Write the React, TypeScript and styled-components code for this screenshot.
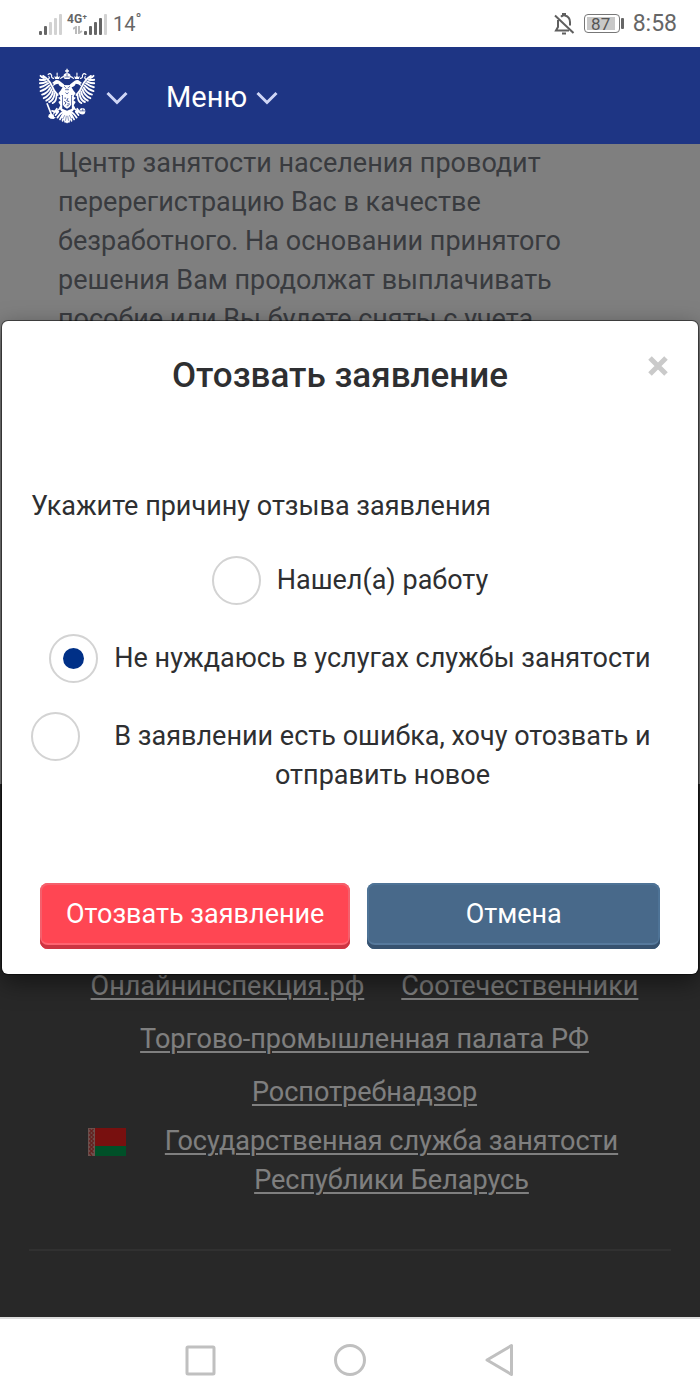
import React, { useState } from "react";
import styled, { createGlobalStyle } from "styled-components";

const GlobalStyle = createGlobalStyle`
  *, *::before, *::after { box-sizing: border-box; }
  body {
    margin: 0;
    background: #fff;
    font-family: Roboto, "Noto Sans", sans-serif;
    font-size: 27px;
    line-height: 39px;
    color: #2e2f31;
  }
  p, h2, ul, fieldset { margin: 0; padding: 0; border: 0; }
`;

const Screen = styled.div`
  min-height: 100vh;
  display: flex;
  flex-direction: column;
`;

const StatusBar = styled.div`
  height: 47px;
  flex: none;
  display: flex;
  align-items: center;
  justify-content: space-between;
  padding: 0 23px 0 38px;
  color: #666;
`;

const StatusGroup = styled.div<{ $gap: number }>`
  display: flex;
  align-items: center;
  gap: ${(p) => p.$gap}px;
`;

const Network = styled.div`
  display: flex;
  align-items: flex-end;
  gap: 5px;
`;

const NetworkLabel = styled.div`
  display: flex;
  flex-direction: column;
  align-items: flex-end;
  width: 20px;
  margin-right: -4px;
  font-size: 12px;
  font-weight: 700;
  line-height: 13px;
  svg { margin-right: 4px; }
`;

const Temperature = styled.span`
  display: flex;
  align-items: flex-start;
  font-size: 20px;
  line-height: 24px;
`;

const Degree = styled.span`
  font-size: 16px;
  line-height: 16px;
`;

const Battery = styled.span`
  display: flex;
  align-items: center;
  gap: 1px;
  &::after {
    content: "";
    width: 3px;
    height: 11px;
    border-radius: 1px;
    background: #666;
  }
`;

const BatteryBody = styled.span`
  width: 36px;
  height: 19px;
  border: 1px solid #777;
  border-radius: 4px;
  padding: 2px;
  display: flex;
`;

const BatteryLevel = styled.span`
  width: 28px;
  background: #c8c8c8;
  text-align: center;
  font-size: 17px;
  line-height: 14px;
  color: #555;
`;

const Clock = styled.span`
  font-size: 23px;
  line-height: 24px;
`;

const Header = styled.header`
  height: 97px;
  flex: none;
  display: flex;
  align-items: center;
  gap: 38px;
  padding: 0 35px;
  background: #1e3584;
`;

const HeaderButton = styled.button<{ $gap: number }>`
  display: flex;
  align-items: center;
  gap: ${(p) => p.$gap}px;
  padding: 2px 0 0;
  border: 0;
  background: none;
  color: #fff;
  font: inherit;
  font-size: 29px;
  line-height: 40px;
`;

const Stage = styled.div`
  position: relative;
  flex: 1;
  display: flex;
  flex-direction: column;
  overflow: hidden;
`;

const Article = styled.main`
  flex: 1;
  min-height: 640px;
  padding: 0 58px;
  background: #fff;
  color: #73777f;
`;

const Footer = styled.footer`
  background: #505050;
  padding: 183px 29px 66px;
`;

const LinkList = styled.ul`
  display: flex;
  flex-wrap: wrap;
  justify-content: center;
  gap: 14px 37px;
  padding: 0 30px 49px 59px;
  border-bottom: 2px solid #626262;
  list-style: none;
`;

const LinkItem = styled.li<{ $flag?: boolean }>`
  display: flex;
  align-items: flex-start;
  gap: 38px;
  text-align: center;
  margin-top: ${(p) => (p.$flag ? "-4px" : "0")};
  padding-right: ${(p) => (p.$flag ? "22px" : "0")};
  svg { flex: none; margin-top: 6px; }
`;

const FooterLink = styled.a`
  color: #fff;
  text-decoration: underline;
  text-decoration-thickness: 2px;
  text-underline-offset: 3px;
`;

const Overlay = styled.div`
  position: absolute;
  inset: 0;
  padding: 177px 2px 0;
  background: rgba(0, 0, 0, 0.5);
`;

const Dialog = styled.section`
  border-radius: 6px;
  background: #fff;
  box-shadow: 0 0 0 1px rgba(0, 0, 0, 0.45), 0 8px 24px rgba(0, 0, 0, 0.5);
`;

const DialogHead = styled.div`
  display: flex;
  align-items: flex-start;
  padding: 34px 30px 91px;
`;

const DialogTitle = styled.h2`
  flex: 1;
  text-align: center;
  font-size: 35px;
  font-weight: 500;
  line-height: 41px;
`;

const CloseButton = styled.button`
  display: flex;
  padding: 1px 0;
  border: 0;
  background: none;
`;

const Reasons = styled.fieldset`
  && { padding: 0 29px; }
`;

const Legend = styled.legend`
  padding: 0;
  margin-bottom: 30px;
`;

const Options = styled.div`
  display: flex;
  flex-direction: column;
  gap: 29px;
`;

const Option = styled.label`
  display: flex;
  justify-content: center;
  gap: 16px;
  text-align: center;
`;

const OptionText = styled.span`
  padding-top: 5px;
`;

const Radio = styled.input`
  appearance: none;
  flex: none;
  display: grid;
  place-items: center;
  width: 49px;
  height: 49px;
  margin: 0;
  border: 2px solid #d3d3d3;
  border-radius: 50%;
  &:checked::before {
    content: "";
    width: 21px;
    height: 21px;
    border-radius: 50%;
    background: #003087;
  }
`;

const Actions = styled.div`
  display: flex;
  gap: 17px;
  padding: 88px 38px 25px;
`;

const ActionButton = styled.button<{ $tone: "danger" | "plain" }>`
  flex: ${(p) => (p.$tone === "danger" ? "none" : "1")};
  height: 66px;
  padding: 0 26px 4px;
  border: 0;
  border-radius: 8px;
  font: inherit;
  color: #fff;
  background: ${(p) => (p.$tone === "danger" ? "#ff4653" : "#48698a")};
  box-shadow: ${(p) =>
    p.$tone === "danger"
      ? "inset 0 -4px #cd3542, inset 0 0 0 2px #f4606c, inset 0 -6px #ff6470"
      : "inset 0 -4px #37526f, inset 0 0 0 2px #4e7396, inset 0 -6px #56799c"};
`;

const NavBar = styled.nav`
  height: 83px;
  flex: none;
  display: flex;
  justify-content: center;
  align-items: center;
  gap: 117px;
  border-top: 2px solid #dcdcdc;
`;

const NavButton = styled.button`
  display: flex;
  padding: 0;
  border: 0;
  background: none;
`;

function Bars({ strong }: { strong: number }) {
  return (
    <svg width="24" height="22" viewBox="0 0 24 22">
      {[4, 9, 13, 17, 21].map((h, i) => (
        <rect key={h} x={1 + i * 5} y={22 - h} width="3" height={h} rx="1" fill={i < strong ? "#666" : "#d2d2d2"} />
      ))}
    </svg>
  );
}

function Chevron() {
  return (
    <svg width="22" height="16" viewBox="0 0 22 16" fill="none" stroke="#cfd6f6" strokeWidth="3">
      <path d="M1.5 4 11 13.5 20.5 4" />
    </svg>
  );
}

function EagleHalf() {
  return (
    <g>
      <g fill="none" stroke="#fff" strokeWidth="5.5" strokeLinecap="round">
        <path d="M22 28Q40 38 49 55Q56 72 68 82" />
        <path d="M25 34Q18 32 14 28M29 39Q20 40 12 39M34 44Q22 49 12 49M38 49Q25 58 13 60M42 55Q29 68 14 71" />
        <path d="M45 61Q35 78 19 81M49 66Q42 84 24 91M53 72Q49 91 32 98M58 77Q56 97 41 102M64 82Q64 101 52 105" />
      </g>
      <path
        fill="#fff"
        d="M83 60Q72 58 70 50L62 52 53 57 55 50 50 48 57 43Q64 37 73 42L80 47 87 52 92 60 92 80 76 84 70 77 77 69Z"
      />
      <path fill="#fff" d="M60 37 57 29 63 31 66 25 69 31 75 29 72 37Z" />
      <path
        fill="none"
        stroke="#fff"
        strokeWidth="3.5"
        strokeLinecap="round"
        d="M66 25V20M77 35Q84 28 91 31M55 35Q47 34 49 27Q45 18 38 24M40 30Q44 34 39 37"
      />
      <path fill="#fff" d="M74 80 82 84 82 121 97 127 97 134 79 128 72 118 76 111 70 102 77 97 69 90 76 88Z" />
      <path
        fill="none"
        stroke="#fff"
        strokeWidth="5"
        strokeLinecap="round"
        d="M77 119Q68 124 63 131M65 121 56 133M70 129 61 139M61 129 50 127"
      />
      <path
        fill="none"
        stroke="#fff"
        strokeWidth="5.5"
        strokeLinecap="round"
        d="M88 128Q76 134 67 146M91 131Q81 139 75 151M94 133Q86 142 83 155M96 134Q91 147 91 158"
      />
      <path fill="#fff" d="M84 54H97V88H84Z" />
    </g>
  );
}

function Emblem() {
  return (
    <svg width="64" height="64" viewBox="0 0 192 192" aria-label="Герб">
      <g transform="matrix(0.96 0 0 1.06 3 3)">
        <EagleHalf />
        <g transform="matrix(-1 0 0 1 194 0)">
          <EagleHalf />
        </g>
        <path fill="#fff" d="M95 8H99V12H103V16H99V20Q109 22 108 29L105 37H89L86 29Q85 22 95 20V16H91V12H95Z" />
        <path
          fill="none"
          stroke="#1e3584"
          strokeWidth="2"
          d="M89 31H105M97 21V30M88 57 94 63M106 57 100 63M91 67H103M92 75 97 79 102 75"
        />
        <path fill="#fff" d="M84 86H110V110Q108 116 97 121Q86 116 84 110Z" />
        <path
          fill="none"
          stroke="#1e3584"
          strokeWidth="2.5"
          d="M89 91H94M100 91 96 98 104 101M88 100 94 104 90 109M98 107 106 108M96 113 102 112"
        />
        <path fill="none" stroke="#fff" strokeWidth="5" strokeLinecap="round" d="M35 107 50 142" />
        <path fill="#fff" d="M40 137 45 135 49 139 54 135 57 144 62 146 55 150 46 149 38 144Z" />
        <circle cx="145" cy="128" r="9" fill="#fff" />
        <path fill="none" stroke="#1e3584" strokeWidth="2" d="M137 127H153M146 120V127" />
        <path fill="#fff" d="M85 128H109L113 145 103 158 97 163 91 158 81 145Z" />
        <path
          fill="none"
          stroke="#1e3584"
          strokeWidth="1.5"
          d="M90 139 84 150M95 141 92 155M104 139 110 150M99 141 102 155"
        />
      </g>
    </svg>
  );
}

function BellOff() {
  return (
    <svg width="22" height="24" viewBox="0 0 22 24" fill="none" stroke="#5f5f5f" strokeWidth="2">
      <path d="M2 3.5 20.5 21" />
      <path d="M5 8V15L3 18.5H16M8 4.8Q9 3.8 10 3.5V2H12V3.5Q17 5 17 10V13.5" />
      <path d="M9 21.5H13" />
    </svg>
  );
}

function BelarusFlag() {
  return (
    <svg width="38" height="28" viewBox="0 0 38 28">
      <rect width="38" height="18" fill="#f0201e" />
      <rect y="18" width="38" height="10" fill="#00a050" />
      <rect width="7" height="28" fill="#d9a39c" />
      <path
        d="M1.5 1 5.5 5 1.5 9 5.5 13 1.5 17 5.5 21 1.5 25 4 28M5.5 1 1.5 5 5.5 9 1.5 13 5.5 17 1.5 21 5.5 25"
        fill="none"
        stroke="#c9423e"
        strokeWidth="1.3"
      />
    </svg>
  );
}

const reasons = [
  "Нашел(а) работу",
  "Не нуждаюсь в услугах службы занятости",
  "В заявлении есть ошибка, хочу отозвать и отправить новое",
];

const links = ["Онлайнинспекция.рф", "Соотечественники", "Торгово-промышленная палата РФ", "Роспотребнадзор"];

export default function App() {
  const [reason, setReason] = useState(1);

  return (
    <Screen>
      <GlobalStyle />
      <StatusBar>
        <StatusGroup $gap={6}>
          <Network>
            <Bars strong={2} />
            <StatusGroup $gap={0}>
              <NetworkLabel>
                4G⁺
                <svg width="10" height="8" viewBox="0 0 10 8" fill="none" stroke="#bbb" strokeWidth="2">
                  <path d="M0 3 3 1V8M6 0V7L9 5" />
                </svg>
              </NetworkLabel>
              <Bars strong={4} />
            </StatusGroup>
          </Network>
          <Temperature>
            14<Degree>°</Degree>
          </Temperature>
        </StatusGroup>
        <StatusGroup $gap={9}>
          <BellOff />
          <Battery>
            <BatteryBody>
              <BatteryLevel>87</BatteryLevel>
            </BatteryBody>
          </Battery>
          <Clock>8:58</Clock>
        </StatusGroup>
      </StatusBar>

      <Header>
        <HeaderButton $gap={7} type="button" aria-label="Госуслуги">
          <Emblem />
          <Chevron />
        </HeaderButton>
        <HeaderButton $gap={9} type="button">
          Меню
          <Chevron />
        </HeaderButton>
      </Header>

      <Stage>
        <Article>
          <p>
            Центр занятости населения проводит перерегистрацию Вас в качестве безработного. На основании принятого
            решения Вам продолжат выплачивать пособие или Вы будете сняты с учета
          </p>
        </Article>
        <Footer>
          <LinkList>
            {links.map((text) => (
              <LinkItem key={text}>
                <FooterLink href="#">{text}</FooterLink>
              </LinkItem>
            ))}
            <LinkItem $flag>
              <BelarusFlag />
              <FooterLink href="#">Государственная служба занятости Республики Беларусь</FooterLink>
            </LinkItem>
          </LinkList>
        </Footer>

        <Overlay>
          <Dialog role="dialog" aria-labelledby="dialog-title">
            <DialogHead>
              <DialogTitle id="dialog-title">Отозвать заявление</DialogTitle>
              <CloseButton type="button" aria-label="Закрыть">
                <svg width="20" height="20" viewBox="0 0 20 20" stroke="#cacaca" strokeWidth="5">
                  <path d="M2 2 18 18M18 2 2 18" />
                </svg>
              </CloseButton>
            </DialogHead>
            <Reasons>
              <Legend>Укажите причину отзыва заявления</Legend>
              <Options>
                {reasons.map((text, i) => (
                  <Option key={text}>
                    <Radio type="radio" name="reason" checked={reason === i} onChange={() => setReason(i)} />
                    <OptionText>{text}</OptionText>
                  </Option>
                ))}
              </Options>
            </Reasons>
            <Actions>
              <ActionButton $tone="danger" type="button">
                Отозвать заявление
              </ActionButton>
              <ActionButton $tone="plain" type="button">
                Отмена
              </ActionButton>
            </Actions>
          </Dialog>
        </Overlay>
      </Stage>

      <NavBar>
        <NavButton type="button" aria-label="Недавние">
          <svg width="32" height="32" viewBox="0 0 32 32" fill="none" stroke="#c0c0c0" strokeWidth="3">
            <rect x="3" y="3" width="27" height="27" rx="1" />
          </svg>
        </NavButton>
        <NavButton type="button" aria-label="Домой">
          <svg width="34" height="34" viewBox="0 0 34 34" fill="none" stroke="#c0c0c0" strokeWidth="3">
            <circle cx="17" cy="17" r="14.5" />
          </svg>
        </NavButton>
        <NavButton type="button" aria-label="Назад">
          <svg width="32" height="34" viewBox="0 0 32 34" fill="none" stroke="#c0c0c0" strokeWidth="3" strokeLinejoin="round">
            <path d="M3 17 27.5 2.5V31.5Z" />
          </svg>
        </NavButton>
      </NavBar>
    </Screen>
  );
}
